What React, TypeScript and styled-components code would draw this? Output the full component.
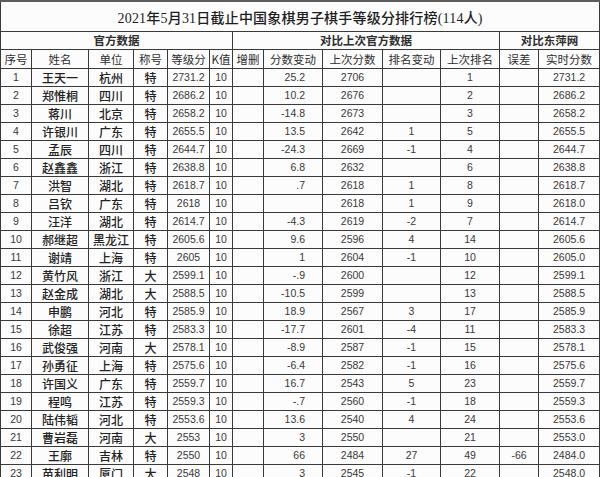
import React from 'react';
import styled, { createGlobalStyle } from 'styled-components';

const GlobalStyle = createGlobalStyle`
  html, body {
    margin: 0;
    padding: 0;
    background: #fcfcfc;
    overflow: hidden;
  }
`;

const Page = styled.div`
  width: 600px;
  height: 477px;
  overflow: hidden;
  background: #fcfcfc;
  border-top: 2px solid #5c5c5c;
  box-sizing: border-box;
`;

const Sheet = styled.table`
  width: 599px;
  table-layout: fixed;
  border-collapse: collapse;
  color: #2a2a2a;
  font-family: "Liberation Sans", "Noto Sans CJK SC", sans-serif;
`;

const TitleCell = styled.td`
  height: 29px;
  padding: 0;
  border: 1px solid #3a3a3a;
  border-top: none;
  text-align: center;
  font-family: "Liberation Serif", "Noto Sans CJK SC", serif;
  font-size: 14px;
  font-weight: 500;
  color: #1e1e1e;
  letter-spacing: 0.2px;
`;

const GroupCell = styled.td`
  height: 17px;
  padding: 0;
  border: 1px solid #3a3a3a;
  text-align: center;
  font-family: "Noto Sans CJK SC", sans-serif;
  font-size: 11.5px;
  font-weight: 700;
  line-height: 17px;
  color: #2e2e2e;
`;

const HeadCell = styled.td`
  height: 18px;
  padding: 0;
  border: 1px solid #3a3a3a;
  text-align: center;
  font-family: "Noto Sans CJK SC", sans-serif;
  font-size: 11.5px;
  line-height: 18px;
  color: #2e2e2e;
  white-space: nowrap;
  overflow: hidden;
`;

const Cell = styled.td<{ $cjk?: boolean; $right?: boolean }>`
  height: 17px;
  padding: 0 ${p => (p.$right ? '17px' : '0')} 0 0;
  border: 1px solid #3a3a3a;
  text-align: ${p => (p.$right ? 'right' : 'center')};
  font-family: ${p => (p.$cjk ? '"Noto Sans CJK SC", sans-serif' : '"Liberation Sans", sans-serif')};
  font-size: ${p => (p.$cjk ? '12px' : '10.5px')};
  font-weight: ${p => (p.$cjk ? 500 : 400)};
  line-height: 17px;
  color: ${p => (p.$cjk ? '#222' : '#383838')};
  white-space: nowrap;
  overflow: hidden;
`;

const widths = [31, 57, 45, 34, 42, 23, 31, 59, 60, 58, 59, 39, 61];

const headers = ['序号', '姓名', '单位', '称号', '等级分', 'K值', '增删', '分数变动', '上次分数', '排名变动', '上次排名', '误差', '实时分数'];

type Row = [string, string, string, string, string, string, string, string, string, string, string];

// rank, name, unit, title, rating, delta, last, rankDelta, lastRank, error, live
const rows: Row[] = [
  ['1', '王天一', '杭州', '特', '2731.2', '25.2', '2706', '', '1', '', '2731.2'],
  ['2', '郑惟桐', '四川', '特', '2686.2', '10.2', '2676', '', '2', '', '2686.2'],
  ['3', '蒋川', '北京', '特', '2658.2', '-14.8', '2673', '', '3', '', '2658.2'],
  ['4', '许银川', '广东', '特', '2655.5', '13.5', '2642', '1', '5', '', '2655.5'],
  ['5', '孟辰', '四川', '特', '2644.7', '-24.3', '2669', '-1', '4', '', '2644.7'],
  ['6', '赵鑫鑫', '浙江', '特', '2638.8', '6.8', '2632', '', '6', '', '2638.8'],
  ['7', '洪智', '湖北', '特', '2618.7', '.7', '2618', '1', '8', '', '2618.7'],
  ['8', '吕钦', '广东', '特', '2618', '', '2618', '1', '9', '', '2618.0'],
  ['9', '汪洋', '湖北', '特', '2614.7', '-4.3', '2619', '-2', '7', '', '2614.7'],
  ['10', '郝继超', '黑龙江', '特', '2605.6', '9.6', '2596', '4', '14', '', '2605.6'],
  ['11', '谢靖', '上海', '特', '2605', '1', '2604', '-1', '10', '', '2605.0'],
  ['12', '黄竹风', '浙江', '大', '2599.1', '-.9', '2600', '', '12', '', '2599.1'],
  ['13', '赵金成', '湖北', '大', '2588.5', '-10.5', '2599', '', '13', '', '2588.5'],
  ['14', '申鹏', '河北', '特', '2585.9', '18.9', '2567', '3', '17', '', '2585.9'],
  ['15', '徐超', '江苏', '特', '2583.3', '-17.7', '2601', '-4', '11', '', '2583.3'],
  ['16', '武俊强', '河南', '大', '2578.1', '-8.9', '2587', '-1', '15', '', '2578.1'],
  ['17', '孙勇征', '上海', '特', '2575.6', '-6.4', '2582', '-1', '16', '', '2575.6'],
  ['18', '许国义', '广东', '特', '2559.7', '16.7', '2543', '5', '23', '', '2559.7'],
  ['19', '程鸣', '江苏', '特', '2559.3', '-.7', '2560', '-1', '18', '', '2559.3'],
  ['20', '陆伟韬', '河北', '特', '2553.6', '13.6', '2540', '4', '24', '', '2553.6'],
  ['21', '曹岩磊', '河南', '大', '2553', '3', '2550', '', '21', '', '2553.0'],
  ['22', '王廓', '吉林', '特', '2550', '66', '2484', '27', '49', '-66', '2484.0'],
  ['23', '苗利明', '厦门', '大', '2548', '3', '2545', '-1', '22', '', '2548.0'],
];

export default function App() {
  return (
    <Page>
      <GlobalStyle />
      <Sheet>
        <colgroup>
          {widths.map((w, i) => <col key={i} style={{ width: w }} />)}
        </colgroup>
        <tbody>
          <tr>
            <TitleCell colSpan={13}>2021年5月31日截止中国象棋男子棋手等级分排行榜(114人)</TitleCell>
          </tr>
          <tr>
            <GroupCell colSpan={6}>官方数据</GroupCell>
            <GroupCell colSpan={5}>对比上次官方数据</GroupCell>
            <GroupCell colSpan={2}>对比东萍网</GroupCell>
          </tr>
          <tr>
            {headers.map(h => <HeadCell key={h}>{h}</HeadCell>)}
          </tr>
          {rows.map(r => (
            <tr key={r[0]}>
              <Cell>{r[0]}</Cell>
              <Cell $cjk>{r[1]}</Cell>
              <Cell $cjk>{r[2]}</Cell>
              <Cell $cjk>{r[3]}</Cell>
              <Cell>{r[4]}</Cell>
              <Cell>10</Cell>
              <Cell />
              <Cell $right>{r[5]}</Cell>
              <Cell>{r[6]}</Cell>
              <Cell>{r[7]}</Cell>
              <Cell>{r[8]}</Cell>
              <Cell>{r[9]}</Cell>
              <Cell>{r[10]}</Cell>
            </tr>
          ))}
        </tbody>
      </Sheet>
    </Page>
  );
}
